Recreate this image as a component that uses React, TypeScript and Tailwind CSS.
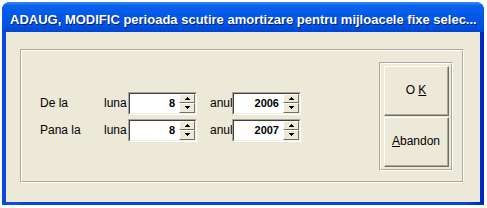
import React from "react";

function Arrow({ up }: { up?: boolean }) {
  return (
    <svg width="5" height="3" viewBox="0 0 5 3" className="block">
      {up ? (
        <path d="M2 0h1v1h1v1h1v1H0V2h1V1h1z" fill="#000" />
      ) : (
        <path d="M0 0h5v1H4v1H3v1H2V2H1V1H0z" fill="#000" />
      )}
    </svg>
  );
}

function SpinBtn({ up }: { up?: boolean }) {
  return (
    <div className="flex-1 border-t border-l border-t-white border-l-white border-b border-r border-b-[#716F64] border-r-[#716F64] bg-[#ECE9D8] flex items-center justify-center">
      <Arrow up={up} />
    </div>
  );
}

function Spin({ value }: { value: string }) {
  return (
    <div className="w-[69px] h-[23px] flex border-t border-l border-t-[#ACA899] border-l-[#ACA899] border-b border-r border-b-white border-r-white">
      <div className="flex-1 flex border-t border-l border-t-[#404040] border-l-[#404040] border-b border-r border-b-[#F1EFE2] border-r-[#F1EFE2]">
        <div className="flex-1 bg-white flex items-center justify-end pr-[4px] text-[11px] font-bold text-black">
          {value}
        </div>
        <div className="w-[16px] flex flex-col bg-[#ECE9D8]">
          <SpinBtn up />
          <SpinBtn />
        </div>
      </div>
    </div>
  );
}

function Row({ label, luna, anul }: { label: string; luna: string; anul: string }) {
  return (
    <div className="flex items-center h-[23px]">
      <div className="w-[64px]">{label}</div>
      <div className="w-[24px]">luna</div>
      <Spin value={luna} />
      <div className="w-[13px]" />
      <div className="w-[22px]">anul</div>
      <Spin value={anul} />
    </div>
  );
}

function Btn({ children }: { children: React.ReactNode }) {
  return (
    <div className="h-[50px] w-[65px] flex border-t border-l border-t-white border-l-white border-b border-r border-b-[#716F64] border-r-[#716F64]">
      <div className="flex-1 flex items-center justify-center border-b border-r border-b-[#ACA899] border-r-[#ACA899] bg-[#ECE9D8] text-[12px] text-black">
        {children}
      </div>
    </div>
  );
}

export default function App() {
  return (
    <div className="w-[487px] h-[208px] bg-white pt-[2px] pl-[2px]" style={{ fontFamily: '"Liberation Sans", Arial, sans-serif' }}>
      <div className="w-[482px] h-[203px] flex flex-col rounded-t-[8px] overflow-hidden bg-[#0046D8]">
        <div className="h-[30px] flex items-center pl-[8px] pt-[6px] bg-[linear-gradient(to_bottom,#3d8cf5_0%,#0a62ec_12%,#0058e8_45%,#0052e0_80%,#0046cf_100%)]">
          <span className="text-white font-bold text-[13px] tracking-[0px] whitespace-nowrap [text-shadow:1px_1px_0_#0a1e6e]">
            ADAUG, MODIFIC perioada scutire amortizare pentru mijloacele fixe selec...
          </span>
        </div>
        <div className="flex-1 flex px-[4px] pb-[3px] bg-[linear-gradient(to_right,#0846d6,#0a52e6_2%,#0846d6_4%,#0846d6_96%,#0036c8_98%,#0028b8)]">
          <div className="flex-1 bg-[#ECE9D8] pl-[14px] pt-[17px] text-[12px] text-black">
            <div className="w-[444px] h-[134px] border-t border-l border-t-[#ACA899] border-l-[#ACA899] border-b border-r border-b-white border-r-white">
              <div className="w-full h-full flex items-center pl-[18px] pr-[9px] border-t border-l border-t-white border-l-white border-b border-r border-b-[#ACA899] border-r-[#ACA899]">
                <div className="flex flex-col gap-[4px] mt-[1px]">
                  <Row label="De la" luna="8" anul="2006" />
                  <Row label="Pana la" luna="8" anul="2007" />
                </div>
                <div className="flex-1" />
                <div className="w-[74px] h-[109px] border-t border-l border-t-[#ACA899] border-l-[#ACA899] border-b border-r border-b-white border-r-white">
                  <div className="w-full h-full flex flex-col gap-[1px] pl-[3px] pt-[2px] border-t border-l border-t-white border-l-white border-b border-r border-b-[#ACA899] border-r-[#ACA899]">
                    <Btn>
                      <span>
                        O <span className="underline">K</span>
                      </span>
                    </Btn>
                    <Btn>
                      <span>
                        <span className="underline">A</span>bandon
                      </span>
                    </Btn>
                  </div>
                </div>
              </div>
            </div>
          </div>
        </div>
      </div>
    </div>
  );
}
